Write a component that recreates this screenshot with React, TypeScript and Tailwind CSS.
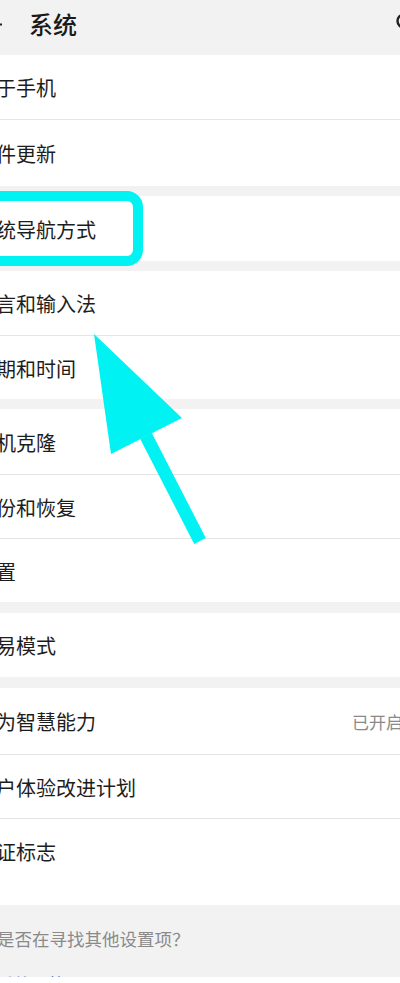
import React from "react";

const FONT = { fontFamily: '"Noto Sans CJK SC", "Noto Sans", sans-serif' };

type RowProps = { label: string; h: string; value?: string; divider?: boolean };

function Row({ label, h, value, divider }: RowProps) {
  return (
    <div className={`flex flex-col ${divider ? "border-t border-[#e4e4e4]" : ""}`}>
      <div className={`flex items-center justify-between pl-[16px] pr-[16px] pt-[2px] ${h}`}>
        <span className="text-[20px] leading-[26px] text-[#1d1d1d]">{label}</span>
        {value ? (
          <span className="flex items-center gap-[4px]">
            <span className="text-[17px] leading-[24px] text-[#8a8a8a]">{value}</span>
            <svg width="8" height="14" viewBox="0 0 8 14" fill="none">
              <path d="M1 1l6 6-6 6" stroke="#b5b5b5" strokeWidth="1.6" />
            </svg>
          </span>
        ) : null}
      </div>
    </div>
  );
}

function Section({ children, extra }: { children: React.ReactNode; extra?: string }) {
  return <div className={`flex flex-col bg-white ${extra ?? ""}`}>{children}</div>;
}

export default function App() {
  return (
    <div className="relative w-[400px] h-[983px] overflow-hidden bg-[#f2f2f2]" style={FONT}>
      <div className="flex flex-col w-[471px] -ml-[40px]">
        {/* Header */}
        <div className="flex h-[55px] items-start justify-between bg-[#f2f2f2] pl-[18px] pr-[13px] pt-[10px]">
          <div className="flex items-center">
            <svg width="24" height="24" viewBox="0 0 24 24" fill="none" className="mt-[1px]">
              <path d="M2 11.5h22M9 4.5l-7 7 7 7" stroke="#222" strokeWidth="2" />
            </svg>
            <span className="ml-[27px] text-[24px] leading-[28px] font-medium text-[#1a1a1a]">系统</span>
          </div>
          <svg width="24" height="24" viewBox="0 0 24 24" fill="none" className="mt-[1px]">
            <circle cx="10" cy="10" r="6.5" stroke="#222" strokeWidth="2.4" />
            <path d="M15 15l6 6" stroke="#222" strokeWidth="2.4" />
          </svg>
        </div>

        <Section>
          <Row label="关于手机" h="h-[64px]" />
          <Row label="软件更新" h="h-[66px]" divider />
        </Section>
        <div className="h-[10px]" />
        <Section>
          <Row label="系统导航方式" h="h-[65px]" />
        </Section>
        <div className="h-[10px]" />
        <Section>
          <Row label="语言和输入法" h="h-[64px]" />
          <Row label="日期和时间" h="h-[63px]" divider />
        </Section>
        <div className="h-[10px]" />
        <Section>
          <Row label="手机克隆" h="h-[65px]" />
          <Row label="备份和恢复" h="h-[63px]" divider />
          <Row label="重置" h="h-[63px]" divider />
        </Section>
        <div className="h-[11px]" />
        <Section>
          <Row label="简易模式" h="h-[64px]" />
        </Section>
        <div className="h-[11px]" />
        <Section extra="pb-[22px]">
          <Row label="华为智慧能力" h="h-[66px]" value="已开启" />
          <Row label="用户体验改进计划" h="h-[63px]" divider />
          <Row label="认证标志" h="h-[64px]" divider />
        </Section>

        {/* Footer */}
        <div className="flex flex-col h-[72px] overflow-hidden bg-[#f2f2f2] pl-[37px] pt-[22px]">
          <span className="text-[17.5px] leading-[24px] text-[#8a8a8a]">是否在寻找其他设置项？</span>
          <span className="mt-[21px] text-[17px] leading-[24px] text-[#3b72d2]">系统导航</span>
        </div>
        <div className="h-[10px] bg-white" />
      </div>

      {/* Annotation box */}
      <div className="absolute left-[-20px] top-[191px] w-[163px] h-[75px] rounded-[16px] border-[10px] border-[#00f2f2]" />

      {/* Annotation arrow */}
      <svg className="absolute left-0 top-0 pointer-events-none" width="400" height="983" viewBox="0 0 400 983">
        <polygon points="94,334 182,418 111,454" fill="#00f2f2" />
        <line x1="146" y1="436" x2="200" y2="541" stroke="#00f2f2" strokeWidth="13" />
      </svg>
    </div>
  );
}
